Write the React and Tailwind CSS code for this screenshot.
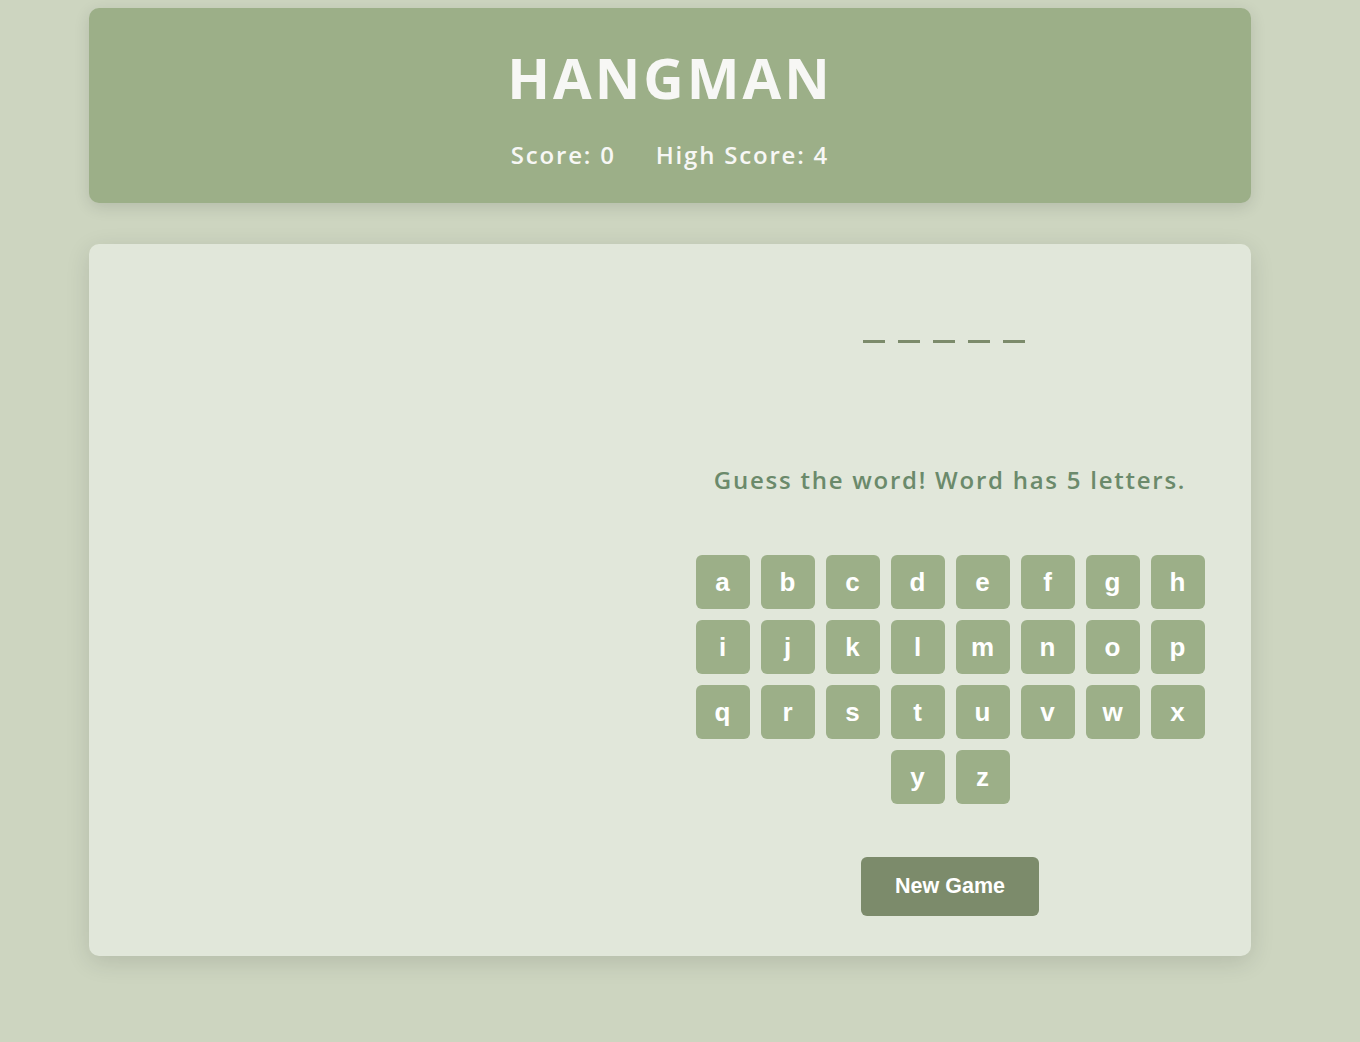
import React from 'react'

const letters = 'abcdefghijklmnopqrstuvwxyz'.split('')

export default function App() {
  return (
    <div className="min-h-[1042px] w-full bg-[#cdd5c0] pt-2">
      <div className="ml-[89px] w-[1162px]">
        {/* Header */}
        <header className="flex flex-col items-center rounded-[10px] bg-[#9caf88] pt-[36px] pb-[32px] shadow-[0_4px_16px_rgba(0,0,0,0.12)] [font-family:'Open_Sans',sans-serif]">
          <h1 className="text-[56px] font-bold leading-[67px] tracking-[3px] text-[#f7f7f5]">HANGMAN</h1>
          <div className="mt-[28px] flex gap-[40px] text-[24px] font-semibold leading-[32px] tracking-[1.8px] text-[#f7f7f5]">
            <span>Score: 0</span>
            <span>High Score: 4</span>
          </div>
        </header>

        {/* Game board */}
        <main className="mt-[41px] flex rounded-[10px] bg-[#e1e7da] p-10 shadow-[0_6px_24px_rgba(0,0,0,0.12)]">
          <div className="flex-1" />
          <div className="flex w-[522px] flex-col items-center">
            <div className="flex pt-[56px]">
              {[0, 1, 2, 3, 4].map((i) => (
                <div key={i} className="mr-[13px] h-[3px] w-[22px] bg-[#7c8b6b]" />
              ))}
            </div>
            <p className="mt-[121px] text-[24px] font-semibold leading-[32px] tracking-[1.75px] text-[#6b8a6b] [font-family:'Open_Sans',sans-serif]">
              Guess the word! Word has 5 letters.
            </p>
            <div className="mt-[59px] flex w-[509px] flex-wrap justify-center gap-[11px]">
              {letters.map((l) => (
                <button
                  key={l}
                  className="flex h-[54px] w-[54px] items-center justify-center rounded-[6px] bg-[#9caf88] text-[26px] font-bold text-white [font-family:'Liberation_Sans',Arial,sans-serif]"
                >
                  {l}
                </button>
              ))}
            </div>
            <button className="mt-[53px] h-[59px] w-[178px] rounded-[6px] bg-[#7c8b6b] text-[21.5px] font-bold text-white [font-family:'Liberation_Sans',Arial,sans-serif]">
              New Game
            </button>
          </div>
        </main>
      </div>
    </div>
  )
}
